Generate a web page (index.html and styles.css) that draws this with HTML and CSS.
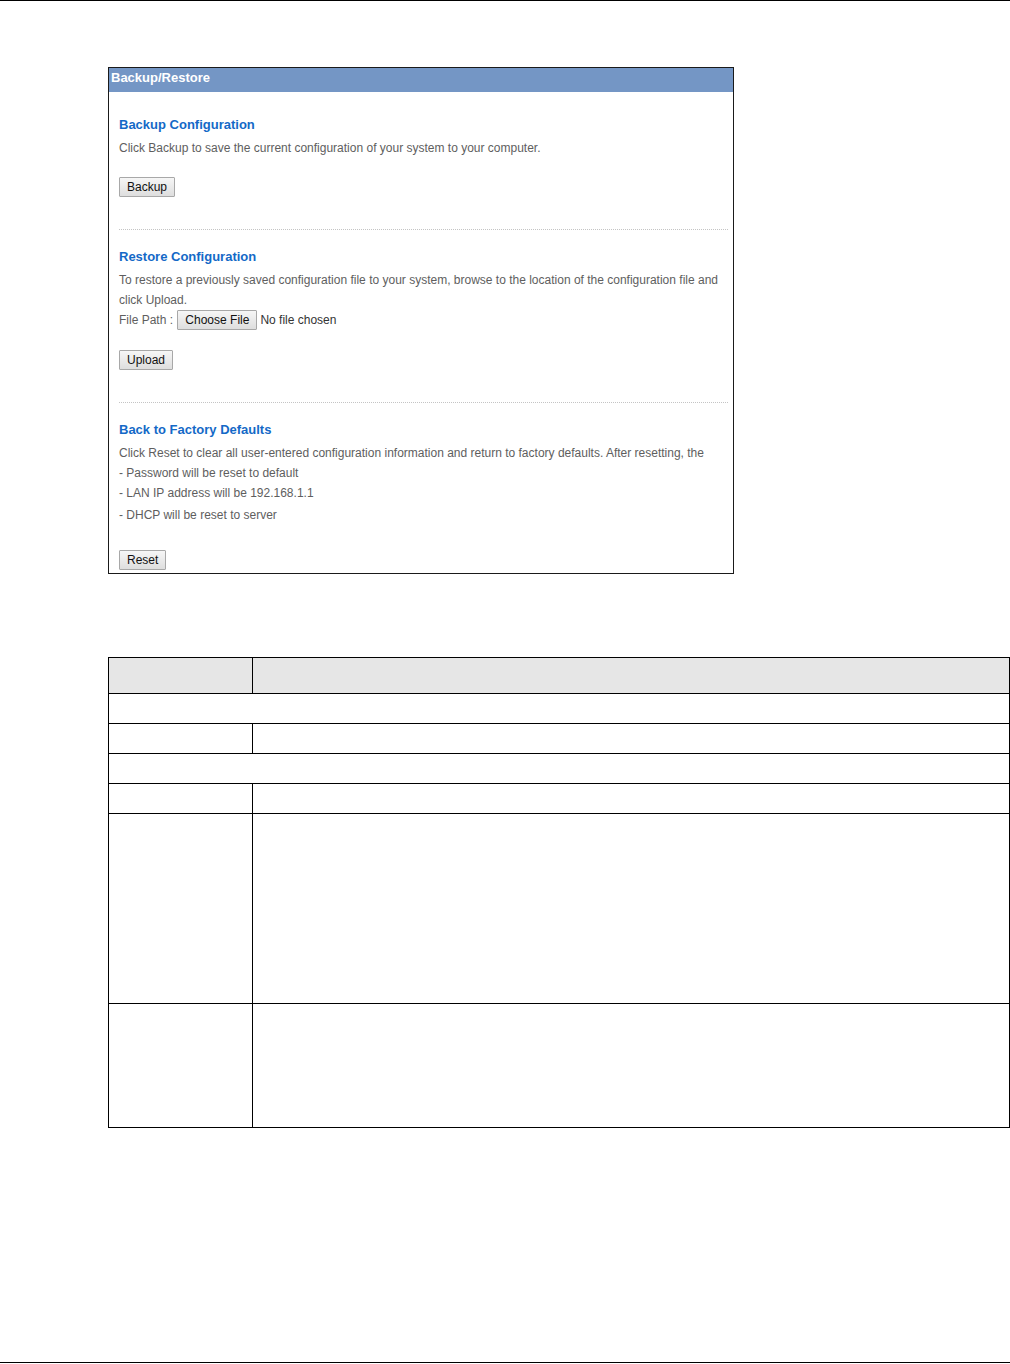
FILE: index.html
```html
<!DOCTYPE html>
<html>
<head>
<meta charset="utf-8">
<link rel="stylesheet" href="styles.css">
</head>
<body>
<div class="page">
  <div class="rule-top"></div>
  <div class="panel">
    <div class="panel-head">Backup/Restore</div>
    <div class="panel-body">
      <div class="section first">
        <div class="sec-title">Backup Configuration</div>
        <div class="line">Click Backup to save the current configuration of your system to your computer.</div>
        <button class="btn btn-gap btn-first">Backup</button>
      </div>
      <div class="dots"></div>
      <div class="section">
        <div class="sec-title">Restore Configuration</div>
        <div class="line">To restore a previously saved configuration file to your system, browse to the location of the configuration file and</div>
        <div class="line">click Upload.</div>
        <div class="line file-row">File Path :&nbsp;<span class="btn btn-file">Choose File</span><span class="nofile">No file chosen</span></div>
        <button class="btn btn-gap">Upload</button>
      </div>
      <div class="dots"></div>
      <div class="section">
        <div class="sec-title">Back to Factory Defaults</div>
        <div class="line">Click Reset to clear all user-entered configuration information and return to factory defaults. After resetting, the</div>
        <div class="line">- Password will be reset to default</div>
        <div class="line">- LAN IP address will be 192.168.1.1</div>
        <div class="line line-dhcp">- DHCP will be reset to server</div>
        <button class="btn btn-gap-reset">Reset</button>
      </div>
    </div>
  </div>

  <table class="grid">
    <tr class="head"><td class="c1"></td><td></td></tr>
    <tr class="r30"><td colspan="2"></td></tr>
    <tr class="r30"><td class="c1"></td><td></td></tr>
    <tr class="r30"><td colspan="2"></td></tr>
    <tr class="r30"><td class="c1"></td><td></td></tr>
    <tr class="r190"><td class="c1"></td><td></td></tr>
    <tr class="r124"><td class="c1"></td><td></td></tr>
  </table>

  <div class="rule-bottom"></div>
</div>
</body>
</html>
```

FILE: styles.css
```css
html, body {
  margin: 0;
  padding: 0;
  background: #fff;
}
body {
  font-family: "Liberation Sans", Arial, sans-serif;
}
.page {
  min-height: 1364px;
  display: flex;
  flex-direction: column;
}
.rule-top {
  height: 1px;
  background: #000;
}
.rule-bottom {
  height: 1px;
  background: #000;
  margin-top: auto;
  margin-bottom: 1px;
}
.panel {
  margin: 66px 0 0 108px;
  width: 624px;
  border: 1px solid #1a1a1a;
}
.panel-head {
  height: 24px;
  line-height: 19px;
  background: #7496c5;
  color: #fff;
  font-weight: bold;
  font-size: 13px;
  padding-left: 2px;
}
.panel-body {
  padding: 0 5px 3px 10px;
}
.section {
  display: flex;
  flex-direction: column;
  align-items: flex-start;
  padding-top: 16px;
}
.section.first {
  padding-top: 22px;
}
.sec-title {
  font-size: 13px;
  font-weight: bold;
  color: #1469c7;
  line-height: 20px;
  margin-top: 1px;
  margin-bottom: 3px;
}
.line {
  font-size: 12px;
  line-height: 20px;
  color: #5e5e5e;
  white-space: nowrap;
}
.line-dhcp {
  margin-top: 2px;
}
.file-row {
  display: flex;
  align-items: center;
}
.btn {
  font-family: "Liberation Sans", Arial, sans-serif;
  font-size: 12px;
  color: #111;
  height: 20px;
  line-height: 18px;
  padding: 0 7px;
  border: 1px solid #a8a8a8;
  border-radius: 1px;
  background: linear-gradient(#f6f6f6, #dedede);
  box-sizing: border-box;
}
.btn-gap {
  margin-top: 20px;
  margin-bottom: 32px;
}
.btn-gap.btn-first {
  margin-top: 19px;
}
.btn-gap-reset {
  margin-top: 25px;
}
.btn-file {
  display: inline-block;
  margin-left: 1px;
  padding: 0 7px;
  color: #111;
}
.nofile {
  color: #333;
  margin-left: 3px;
}
.dots {
  height: 0;
  border-top: 1px dotted #c4c4c4;
}
.grid {
  margin: 83px 0 0 108px;
  width: 902px;
  border-collapse: collapse;
  table-layout: fixed;
}
.grid td {
  border: 1px solid #000;
  padding: 0;
}
.grid td.c1 {
  width: 143px;
}
.grid tr.head td {
  background: #e6e6e6;
  height: 35px;
}
.grid tr.r30 td {
  height: 29px;
}
.grid tr.r190 td {
  height: 189px;
}
.grid tr.r124 td {
  height: 123px;
}
```
